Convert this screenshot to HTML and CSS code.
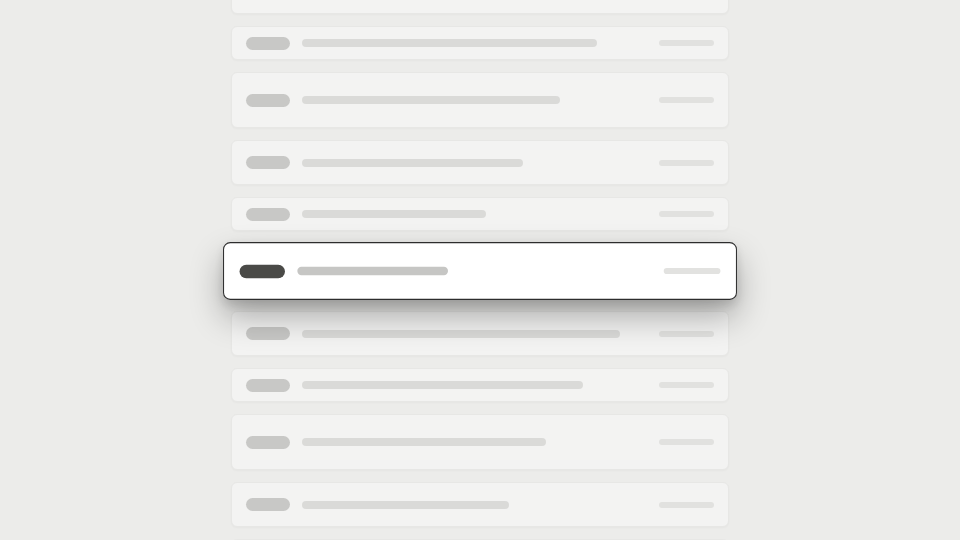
FILE: index.html
```html
<!DOCTYPE html>
<html>
<head>
<meta charset="utf-8">
<link rel="stylesheet" href="styles.css">
</head>
<body>
<div class="list">
  <div class="row h45"><span class="pill"></span><span class="bar" style="width:232px"></span><span class="meta"></span></div>
  <div class="row h34"><span class="pill"></span><span class="bar" style="width:295px"></span><span class="meta"></span></div>
  <div class="row h56"><span class="pill"></span><span class="bar" style="width:258px"></span><span class="meta"></span></div>
  <div class="row h45"><span class="pill"></span><span class="bar" style="width:221px"></span><span class="meta"></span></div>
  <div class="row h34"><span class="pill"></span><span class="bar" style="width:184px"></span><span class="meta"></span></div>
  <div class="row h56 selected"><span class="pill"></span><span class="bar" style="width:146px"></span><span class="meta"></span></div>
  <div class="row h45"><span class="pill"></span><span class="bar" style="width:318px"></span><span class="meta"></span></div>
  <div class="row h34"><span class="pill"></span><span class="bar" style="width:281px"></span><span class="meta"></span></div>
  <div class="row h56"><span class="pill"></span><span class="bar" style="width:244px"></span><span class="meta"></span></div>
  <div class="row h45"><span class="pill"></span><span class="bar" style="width:207px"></span><span class="meta"></span></div>
  <div class="row h34"><span class="pill"></span><span class="bar" style="width:170px"></span><span class="meta"></span></div>
</div>
</body>
</html>
```
FILE: styles.css
```css
html, body {
  margin: 0;
  padding: 0;
  width: 960px;
  height: 540px;
  overflow: hidden;
  background: #ececea;
  font-family: "Liberation Sans", Arial, sans-serif;
}
.list {
  width: 498px;
  height: 540px;
  overflow: visible;
  margin: -31px auto 0;
  display: flex;
  flex-direction: column;
  gap: 12px;
}
.row {
  box-sizing: border-box;
  display: flex;
  align-items: center;
  padding: 0 14px;
  background: #f3f3f2;
  border: 1px solid #e7e7e5;
  border-radius: 6px;
  box-shadow: 0 1px 2px rgba(0,0,0,0.03);
  flex: none;
}
.h34 { height: 34px; }
.h45 { height: 45px; }
.h56 { height: 56px; }
.pill {
  width: 44px;
  height: 13px;
  border-radius: 7px;
  background: #c8c8c6;
  flex: none;
}
.bar {
  height: 8px;
  border-radius: 4px;
  background: #dadad8;
  margin-left: 12px;
  flex: none;
}
.meta {
  width: 55px;
  height: 6px;
  border-radius: 3px;
  background: #e1e1df;
  margin-left: auto;
  flex: none;
}
.selected {
  position: relative;
  z-index: 1;
  padding: 0 15px;
  background: #ffffff;
  border: 1.5px solid #2d2d2d;
  border-radius: 7px;
  transform: scale(1.032);
  box-shadow: 0 16px 32px rgba(0,0,0,0.30), 0 4px 10px rgba(0,0,0,0.12);
}
.selected .pill { background: #4a4a47; }
.selected .bar { background: #c6c6c4; }
.selected .meta { background: #e2e2e0; }
```
